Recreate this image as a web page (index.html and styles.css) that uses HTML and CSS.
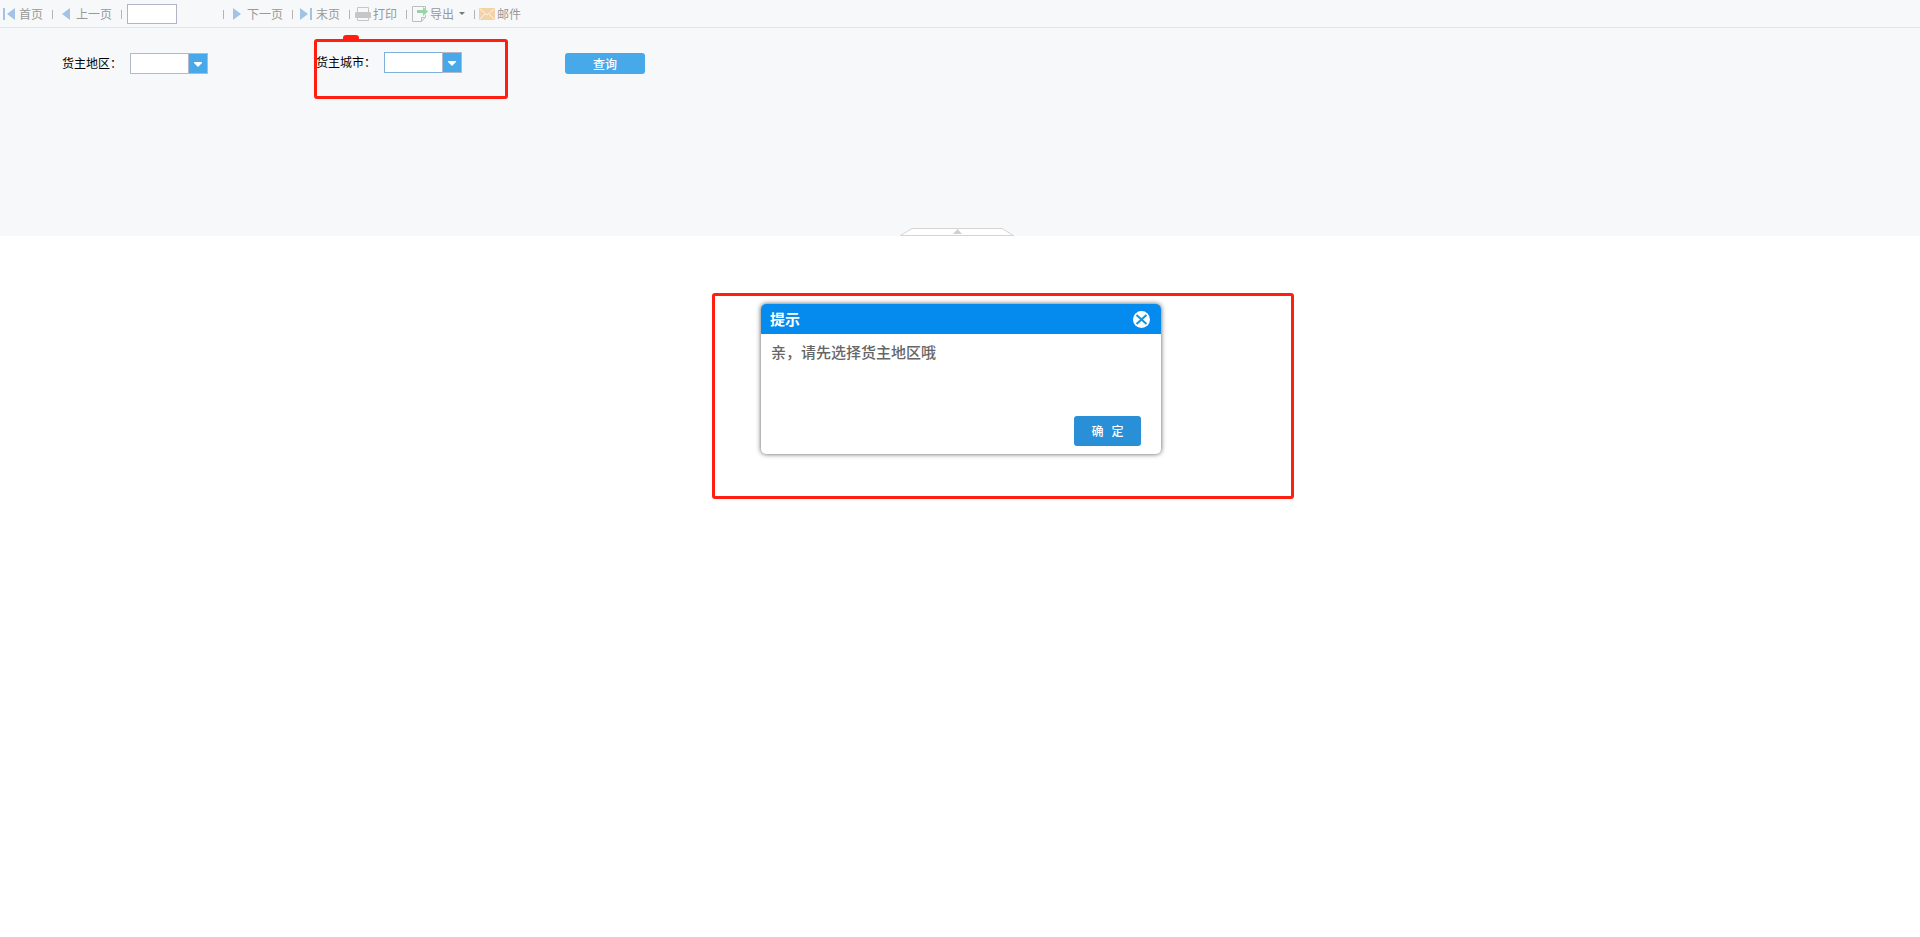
FILE: index.html
```html
<!DOCTYPE html>
<html lang="zh-CN">
<head>
<meta charset="utf-8">
<title>报表查询</title>
<link rel="stylesheet" href="styles.css">
</head>
<body>
<section class="query-panel">
  <nav class="toolbar" aria-label="报表工具栏">
    <button class="tool" type="button"><svg width="13" height="12" viewBox="0 0 13 12"><path fill="#a3c3e6" d="M0 0h2v12H0zM12 0v12L4 6z"/></svg>首页</button>
    <i class="sep"></i>
    <button class="tool tool-page" type="button"><svg width="8" height="12" viewBox="0 0 8 12"><path fill="#a3c3e6" d="M8 0v12L0 6z"/></svg>上一页</button>
    <i class="sep"></i>
    <input class="page-input" type="text" aria-label="页码">
    <i class="sep"></i>
    <button class="tool tool-page" type="button"><svg width="8" height="12" viewBox="0 0 8 12"><path fill="#a3c3e6" d="M0 0v12l8-6z"/></svg>下一页</button>
    <i class="sep"></i>
    <button class="tool" type="button"><svg width="13" height="12" viewBox="0 0 13 12"><path fill="#a3c3e6" d="M0 0v12l8-6zM10 0h2v12h-2z"/></svg>末页</button>
    <i class="sep"></i>
    <button class="tool tool-icon" type="button"><svg width="16" height="14" viewBox="0 0 16 14"><path fill="#f7f8fa" stroke="#c6c6c6" d="M2.500 6V.500h11V6"/><path fill="#c6c6c6" d="M1 5h14l1 1v5H0V6z"/><path fill="#f7f8fa" stroke="#c6c6c6" d="M2.500 10.500h11v3h-11z"/></svg>打印</button>
    <i class="sep"></i>
    <button class="tool tool-icon" type="button"><svg width="16" height="16" viewBox="0 0 16 16"><path fill="none" stroke="#bdbdbd" d="M13.500 9v2l-4 4.500H.500V.500h13V3M13.500 11.500h-4v4"/><path fill="#9ad4a6" d="M5 4h6V1l5 4.500L11 10V7H5z"/></svg>导出<svg class="caret" width="6" height="3" viewBox="0 0 6 3"><path fill="#777" d="M0 0h6L3 3z"/></svg></button>
    <i class="sep"></i>
    <button class="tool tool-mail" type="button"><svg width="16" height="12" viewBox="0 0 16 12"><rect width="16" height="12" rx="1" fill="#f3d3a7"/><path fill="none" stroke="#fbf3e7" d="M1 1l7 6 7-6M1 11l5-5M15 11l-5-5"/></svg>邮件</button>
  </nav>
  <form class="filters">
    <div class="field">
      <label for="region">货主地区：</label>
      <div class="combo">
        <select id="region"><option></option></select>
        <span class="arrow"><svg width="8" height="5" viewBox="0 0 8 5"><path fill="#fff" d="M0 0h8v1L4 5 0 1z"/></svg></span>
      </div>
    </div>
    <div class="field field-city">
      <label for="city">货主城市：</label>
      <div class="combo combo-active">
        <select id="city"><option></option></select>
        <span class="arrow"><svg width="8" height="5" viewBox="0 0 8 5"><path fill="#fff" d="M0 0h8v1L4 5 0 1z"/></svg></span>
      </div>
      <span class="mark mark-city"></span>
    </div>
    <button class="query" type="button">查询</button>
  </form>
  <button class="collapse" type="button" aria-label="收起"><svg width="114" height="8" viewBox="0 0 114 8"><path fill="#fff" stroke="#d4d4d4" d="M.500 7.500L12 .500h90l11.500 7z"/><path fill="#d0d0d0" d="M53 6l4.500-5L62 6z"/></svg></button>
</section>
<main class="report">
  <div class="dialog-area">
    <span class="mark mark-dialog"></span>
    <section class="dialog" role="dialog" aria-labelledby="dialog-title">
      <header class="dialog-head">
        <h1 id="dialog-title">提示</h1>
        <button class="close" type="button" aria-label="关闭"><svg width="17" height="17" viewBox="0 0 17 17"><circle cx="8.500" cy="8.500" r="8.500" fill="#fff"/><path stroke="#0a9ae0" stroke-width="2" d="M3.500 4l10 9M13.500 4l-10 9"/></svg></button>
      </header>
      <p class="message">亲，请先选择货主地区哦</p>
      <footer class="dialog-foot"><button class="ok" type="button">确&nbsp;&nbsp;&nbsp;定</button></footer>
    </section>
  </div>
</main>
</body>
</html>
```

FILE: styles.css
```css
* { box-sizing: border-box; }
body {
  min-height: 100vh;
  margin: 0;
  background: #fff;
  color: #000;
  font: 12px/16px "Noto Sans CJK SC", sans-serif;
}
button, input, select { font: inherit; margin: 0; padding: 0; }
button { border: 0; background: none; color: inherit; }
svg { display: block; flex: none; }

.query-panel {
  display: flex;
  flex-direction: column;
  min-height: 236px;
  background: #f7f8fa;
}
.toolbar {
  display: flex;
  align-items: center;
  height: 28px;
  padding-left: 3px;
  border-bottom: 1px solid #e3e4e7;
}
.tool {
  display: flex;
  align-items: center;
  gap: 3px;
  color: #999;
  white-space: nowrap;
}
.tool-page { gap: 6px; margin-left: 2px; }
.tool-icon { gap: 2px; margin-left: -2px; }
.tool-mail { gap: 2px; margin-left: -3px; }
.caret { margin-left: 3px; }
.sep {
  width: 1px;
  height: 9px;
  margin: 2px 7px 0 9px;
  background: #b4b4b4;
}
.page-input {
  width: 50px;
  height: 20px;
  margin: 0 37px 0 -2px;
  border: 1px solid #b0b4c4;
  background: #fff;
}

.filters {
  display: flex;
  align-items: flex-start;
  padding: 25px 62px 0;
}
.field {
  position: relative;
  display: flex;
  align-items: center;
  width: 254px;
}
.field-city { width: 249px; margin-top: -1px; }
.field label { width: 68px; line-height: 18px; padding-bottom: 2px; }
.combo { display: grid; width: 78px; height: 21px; }
.combo select {
  grid-area: 1 / 1;
  appearance: none;
  border: 1px solid #b4b8c8;
  border-radius: 0;
  background: #fff;
}
.combo-active select { border-color: #7fafdc; }
.arrow {
  grid-area: 1 / 1;
  justify-self: end;
  display: grid;
  place-items: center;
  width: 20px;
  padding-top: 2px;
  border: 1px solid #b4b8c8;
  background: #47a8ea;
  pointer-events: none;
}
.query {
  width: 80px;
  height: 21px;
  border-radius: 3px;
  background: #47a8ea;
  color: #fff;
  font-weight: 500;
}
.collapse { align-self: center; margin: auto 6px 0 0; }

.mark {
  position: absolute;
  border: 3px solid #ff1e10;
  border-radius: 3px;
  pointer-events: none;
}
.mark-city { left: -2px; top: -13px; width: 194px; height: 60px; }
.mark-city::before {
  content: "";
  position: absolute;
  left: 26px;
  top: -7px;
  width: 16px;
  height: 5px;
  border-radius: 3px 3px 0 0;
  background: #ff1e10;
}
.mark-dialog { left: -49px; top: -11px; width: 582px; height: 206px; }

.report { padding: 68px 0 0 2px; }
.dialog-area { position: relative; width: 400px; margin: 0 auto; }
.dialog {
  display: flex;
  flex-direction: column;
  min-height: 150px;
  border-radius: 5px;
  background: #fff;
  box-shadow: 0 0 5px #555;
  overflow: hidden;
}
.dialog-head {
  display: flex;
  align-items: center;
  justify-content: space-between;
  height: 30px;
  padding: 0 11px 0 9px;
  background: #058bed;
  color: #fff;
}
.dialog-head h1 { margin: 0; font-size: 15px; line-height: 20px; }
.message {
  margin: 8px 10px;
  color: #666;
  font-size: 15px;
  font-weight: 500;
  line-height: 20px;
}
.dialog-foot {
  display: flex;
  justify-content: flex-end;
  margin-top: auto;
  padding: 0 20px 8px;
}
.ok {
  width: 67px;
  height: 30px;
  border-radius: 3px;
  background: #2990d8;
  color: #fff;
  font-weight: 500;
}
```
